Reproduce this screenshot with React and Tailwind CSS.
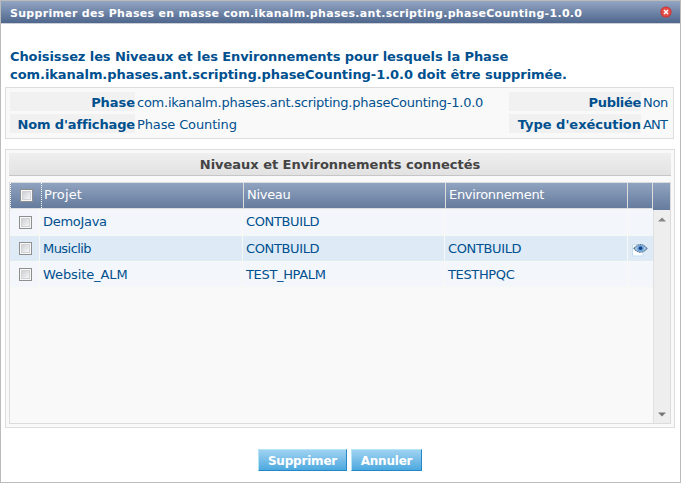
import React from "react";

const rows = [
  { projet: "DemoJava", pTrack: "tracking-[-0.3px]", niveau: "CONTBUILD", nTrack: "tracking-[-0.36px]", env: "", height: "h-[27px]", bg: "bg-[#f3f6fb]" },
  { projet: "Musiclib", pTrack: "tracking-[-0.55px]", niveau: "CONTBUILD", nTrack: "tracking-[-0.36px]", env: "CONTBUILD", eye: true, height: "h-[26px]", bg: "bg-[#deebf6]" },
  { projet: "Website_ALM", pTrack: "tracking-[-0.1px]", niveau: "TEST_HPALM", nTrack: "tracking-[-0.34px]", env: "TESTHPQC", height: "h-[26px]", bg: "bg-[#f3f6fb]" },
];

function Checkbox() {
  return (
    <span
      role="checkbox"
      aria-checked="false"
      className="block size-[13px] shrink-0 border border-[#8e8f8f] bg-[#f8f8f8] p-px"
    >
      <span className="block size-[9px] border border-[#d0d2d6] bg-linear-to-br from-[#cdd0d5] to-[#f6f6f6]" />
    </span>
  );
}

function CloseIcon() {
  return (
    <svg width="12" height="12" viewBox="0 0 12 12">
      <circle cx="6" cy="6" r="5.6" fill="#d2322f" />
      <circle cx="6" cy="6" r="4.6" fill="#e04f4a" />
      <path d="M4 4l4 4M8 4l-4 4" stroke="#fff" strokeWidth="1.5" />
    </svg>
  );
}

function EyeIcon() {
  return (
    <svg width="16" height="14" viewBox="0 0 16 14">
      <path d="M.5 1.5h10.5V13H.5z" fill="#fff" stroke="#c3e0f2" strokeWidth="1" />
      <path d="M2 5.5Q8.5 -2.4 15 5.5Q8.5 13 2 5.5z" fill="#a9cdeb" stroke="#5f7b96" strokeWidth="1.2" strokeDasharray="1.8 .5" />
      <circle cx="8.5" cy="5.3" r="3.3" fill="#6ea3d8" />
      <circle cx="8.5" cy="5.3" r="1.8" fill="#123f85" />
    </svg>
  );
}

function Field({ label, value, labelClass, valueClass, className }) {
  return (
    <div className="flex h-[19px]">
      <div className={"flex h-[19px] justify-end bg-[#f1f1f1] pt-[2px] font-bold " + className}>
        <span className={labelClass}>{label}</span>
      </div>
      <span className={"ml-[2px] pt-[2px] " + valueClass}>{value}</span>
    </div>
  );
}

export default function App() {
  return (
    <div className="flex h-[483px] w-[681px] flex-col overflow-hidden border border-[#bbb] bg-white font-['DejaVu_Sans',sans-serif] text-[13px] leading-[18px] whitespace-nowrap text-[#00508f]">
      <header className="flex h-[23px] shrink-0 items-center justify-between border-b border-[#ccd0d6] bg-linear-to-b from-[#93a5c3] to-[#4f678d] pr-2 pl-[9px] text-[11px] font-bold text-white">
        <span className="pt-[3px] tracking-[0.293px]">Supprimer des Phases en masse com.ikanalm.phases.ant.scripting.phaseCounting-1.0.0</span>
        <CloseIcon />
      </header>

      <p className="mt-6 ml-[9px] h-9 font-bold">
        <span className="block tracking-[-0.09px]">Choisissez les Niveaux et les Environnements pour lesquels la Phase</span>
        <span className="block tracking-[-0.06px]">com.ikanalm.phases.ant.scripting.phaseCounting-1.0.0 doit être supprimée.</span>
      </p>

      <section className="mt-[3px] mr-[6px] ml-1 flex h-[52px] shrink-0 justify-between border border-[#ddd] bg-[#f9f9f9] py-1 pl-1">
        <div className="flex flex-col gap-[3px]">
          <Field label="Phase" value="com.ikanalm.phases.ant.scripting.phaseCounting-1.0.0" className="w-[125px]" labelClass="tracking-[-0.05px]" valueClass="tracking-[-0.25px]" />
          <Field label="Nom d'affichage" value="Phase Counting" className="w-[125px]" labelClass="tracking-[-0.14px]" valueClass="tracking-[-0.13px]" />
        </div>
        <div className="flex w-[164px] flex-col gap-[3px]">
          <Field label="Publiée" value="Non" className="w-[132px]" labelClass="tracking-[-0.3px]" valueClass="tracking-[-0.3px]" />
          <Field label="Type d'exécution" value="ANT" className="w-[132px]" labelClass="tracking-[-0.02px]" valueClass="tracking-[-0.8px]" />
        </div>
      </section>

      <section className="mt-[10px] mr-[5px] ml-1 h-[279px] shrink-0 border border-[#ddd] bg-[#f9f9f9] px-[3px] py-[3px]">
        <h2 className="h-[23px] border-b border-[#c6c6c6] bg-linear-to-b from-[#efefef] to-[#e2e2e2] text-center font-bold leading-[23px] text-[#444]">
          <span className="tracking-[-0.03px]">Niveaux et Environnements connectés</span>
        </h2>
        <div className="mt-[6px] h-[242px] border border-[#dcdcdc]">
          <div className="flex h-[26px] border-b border-[#ddd] bg-linear-to-b from-[#90a3c0] to-[#667c9e] leading-[24px] text-white">
            <div className="flex w-[31px] items-center border-l border-dotted border-white pl-[9px]"><Checkbox /></div>
            <div className="w-[202px] border-l border-dotted border-white pl-[2px] tracking-[0.1px]">Projet</div>
            <div className="w-[202px] border-l border-[#ddd] pl-[3px] tracking-[-0.3px]">Niveau</div>
            <div className="w-[182px] border-l border-[#ddd] pl-[3px] tracking-[-0.32px]">Environnement</div>
            <div className="w-[25px] border-l border-[#ddd]" />
            <div className="h-[27px] flex-1 border-l border-[#ddd] bg-linear-to-b from-[#90a3c0] to-[#667c9e]" />
          </div>
          <div className="flex h-[214px]">
            <div className="w-[643px]">
              {rows.map((r) => (
                <div key={r.projet} className={"flex border-b border-[#f8f8f5] leading-[25px] " + r.height + " " + r.bg}>
                  <div className="flex w-[29px] items-center pl-[9px]"><Checkbox /></div>
                  <div className={"w-[203px] border-l border-[#f8f8f5] pl-[3px] " + r.pTrack}>{r.projet}</div>
                  <div className={"w-[202px] border-l border-[#f8f8f5] pl-[3px] " + r.nTrack}>{r.niveau}</div>
                  <div className="w-[183px] border-l border-[#f8f8f5] pl-[3px] tracking-[-0.36px]">{r.env}</div>
                  <div className="w-[25px] border-l border-[#f8f8f5] pt-[7px] pl-1">{r.eye && <EyeIcon />}</div>
                </div>
              ))}
            </div>
            <div className="mt-px flex flex-1 flex-col items-center justify-between border-l border-[#e0e0e0] bg-[#eee] pt-[7px] pb-[6px]">
              <svg width="8" height="5" viewBox="0 0 8 5"><path d="M0 4.5L4 .5L8 4.5z" fill="#858585" /></svg>
              <svg width="8" height="5" viewBox="0 0 8 5"><path d="M0 .5L4 4.5L8 .5z" fill="#777" /></svg>
            </div>
          </div>
        </div>
      </section>

      <footer className="mt-[21px] ml-[257px] flex gap-1 text-[12px] font-bold text-white">
        <button className="h-[22px] w-[89px] border border-t-[#b4e5f7] border-r-[#2587c6] border-b-[#2587c6] border-l-[#b4e5f7] bg-linear-to-b from-[#9ed2f1] to-[#4ba9df] pt-px">
          <span className="tracking-[-0.2px]">Supprimer</span>
        </button>
        <button className="h-[22px] w-[71px] border border-t-[#b4e5f7] border-r-[#2587c6] border-b-[#2587c6] border-l-[#b4e5f7] bg-linear-to-b from-[#9ed2f1] to-[#4ba9df] pt-px">
          <span className="tracking-[-0.2px]">Annuler</span>
        </button>
      </footer>
    </div>
  );
}
